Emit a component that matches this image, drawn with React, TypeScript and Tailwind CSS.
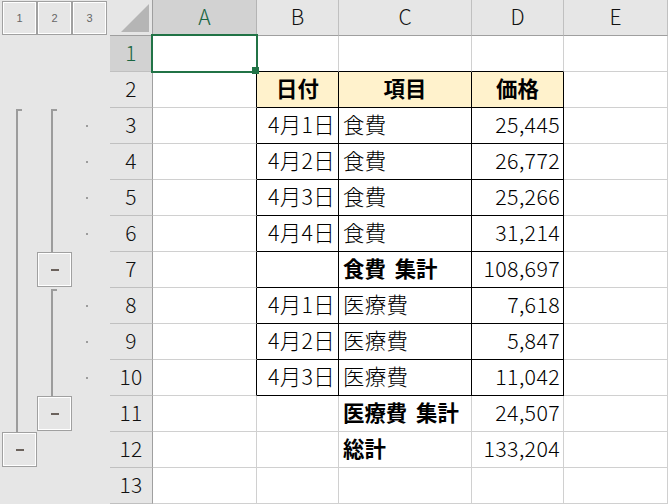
const FONT = "font-['Noto_Sans_CJK_JP','Liberation_Sans',sans-serif]";

type CellData = { t?: string; bold?: boolean; align?: 'l' | 'c' | 'r' };
type RowData = { n: number; outline: [string, string, string]; b?: CellData; c?: CellData; d?: CellData; boxed?: boolean; fill?: boolean };

const R = (t: string): CellData => ({ t, align: 'r' });
const L = (t: string): CellData => ({ t, align: 'l' });
const BL = (t: string): CellData => ({ t, align: 'l', bold: true });
const C = (t: string): CellData => ({ t, align: 'c', bold: true });

const rows: RowData[] = [
  { n: 1, outline: ['', '', ''] },
  { n: 2, outline: ['', '', ''], b: C('日付'), c: C('項目'), d: C('価格'), boxed: true, fill: true },
  { n: 3, outline: ['bartop', 'bartop', 'dot'], b: R('4月1日'), c: L('食費'), d: R('25,445'), boxed: true },
  { n: 4, outline: ['bar', 'bar', 'dot'], b: R('4月2日'), c: L('食費'), d: R('26,772'), boxed: true },
  { n: 5, outline: ['bar', 'bar', 'dot'], b: R('4月3日'), c: L('食費'), d: R('25,266'), boxed: true },
  { n: 6, outline: ['bar', 'bar', 'dot'], b: R('4月4日'), c: L('食費'), d: R('31,214'), boxed: true },
  { n: 7, outline: ['bar', 'minus', ''], c: BL('食費 集計'), d: R('108,697'), boxed: true },
  { n: 8, outline: ['bar', 'bartop', 'dot'], b: R('4月1日'), c: L('医療費'), d: R('7,618'), boxed: true },
  { n: 9, outline: ['bar', 'bar', 'dot'], b: R('4月2日'), c: L('医療費'), d: R('5,847'), boxed: true },
  { n: 10, outline: ['bar', 'bar', 'dot'], b: R('4月3日'), c: L('医療費'), d: R('11,042'), boxed: true },
  { n: 11, outline: ['bar', 'minus', ''], c: BL('医療費 集計'), d: R('24,507') },
  { n: 12, outline: ['minus', '', ''], c: BL('総計'), d: R('133,204') },
  { n: 13, outline: ['', '', ''] },
];

function OutlineButton({ children }: { children: React.ReactNode }) {
  return (
    <div className="w-[35px] h-[35px] border border-[#a0a0a0] bg-[#e6e6e6] shadow-[inset_0_0_0_1px_#ffffff] flex items-center justify-center">
      {children}
    </div>
  );
}

function OutlineCell({ kind }: { kind: string }) {
  return (
    <div className="w-[35px] h-[36px] shrink-0 relative">
      {kind === 'minus' && (
        <OutlineButton>
          <div className="w-[8px] h-[2px] bg-[#6b625c]" />
        </OutlineButton>
      )}
      {kind === 'bar' && <div className="ml-[14px] w-[2px] h-[36px] bg-[#9c9c9c]" />}
      {kind === 'bartop' && (
        <div className="ml-[14px] mt-px w-[6px] h-[35px] border-l-2 border-t-2 border-[#9c9c9c]" />
      )}
      {kind === 'dot' && (
        <div className="h-[36px] flex items-center">
          <div className="ml-[14px] w-[2px] h-[2px] bg-[#9c9c9c]" />
        </div>
      )}
    </div>
  );
}

function DataCell({ w, cell, boxed, fill, bottomBlack }: { w: string; cell?: CellData; boxed?: boolean; fill?: boolean; bottomBlack?: boolean }) {
  const align = cell?.align === 'r' ? 'justify-end pr-[3px]' : cell?.align === 'c' ? 'justify-center' : 'justify-start pl-[4px]';
  return (
    <div
      className={`${w} h-[36px] shrink-0 border-r border-b flex items-center pb-[3px] text-[21.4px] leading-none whitespace-nowrap text-black ${align} ${
        boxed ? 'border-r-black' : 'border-r-[#d0d0d0]'
      } ${boxed || bottomBlack ? 'border-b-black' : 'border-b-[#d0d0d0]'} ${fill ? 'bg-[#fff2cc]' : 'bg-white'} ${
        cell?.bold ? 'font-bold [word-spacing:4px]' : 'font-light tracking-[0.35px]'
      }`}
    >
      {cell?.t}
    </div>
  );
}

export default function App() {
  return (
    <div className={`w-[668px] h-[504px] overflow-hidden bg-white flex flex-col ${FONT}`}>
      <div className="flex h-[36px] shrink-0">
        <div className="w-[110px] h-[36px] shrink-0 bg-[#e6e6e6] pl-[2px] pt-px flex">
          {[1, 2, 3].map((l) => (
            <div
              key={l}
              className="w-[35px] h-[34px] border border-[#a0a0a0] bg-[#e6e6e6] shadow-[inset_0_0_0_1px_#ffffff] flex items-center justify-center text-[11px] text-[#666666] font-['Liberation_Sans',sans-serif]"
            >
              {l}
            </div>
          ))}
        </div>
        <div className="w-[43px] h-[36px] shrink-0 bg-[#e6e6e6] border-r border-b border-[#9f9f9f] flex items-center justify-center">
          <svg width="42" height="35" viewBox="0 0 42 35" className="block">
            <polygon points="11,32 39,4 39,32" fill="#b5b5b5" />
          </svg>
        </div>
        {[
          ['A', 'w-[104px]', true],
          ['B', 'w-[82px]', false],
          ['C', 'w-[133px]', false],
          ['D', 'w-[92px]', false],
          ['E', 'w-[104px]', false],
        ].map(([label, w, active]) => (
          <div
            key={label as string}
            className={`${w as string} h-[36px] shrink-0 border-r border-b flex items-center justify-center pb-[3px] text-[21px] leading-none font-light ${
              active
                ? 'bg-[#d2d2d2] text-[#1a6642] border-r-[#b4b4b4] border-b-[#9f9f9f]'
                : 'bg-[#e6e6e6] text-[#111111] border-r-[#c0c0c0] border-b-[#9f9f9f]'
            }`}
          >
            {label as string}
          </div>
        ))}
      </div>
      {rows.map((r) => (
        <div key={r.n} className="flex h-[36px] shrink-0">
          <div className="w-[110px] shrink-0 bg-[#e6e6e6] pl-[2px] flex">
            {r.outline.map((k, i) => (
              <OutlineCell key={i} kind={k} />
            ))}
          </div>
          <div
            className={`w-[43px] h-[36px] shrink-0 border-r border-r-[#9f9f9f] border-b border-b-[#c0c0c0] flex items-center justify-center pb-[3px] text-[21px] leading-none font-light tracking-[0.3px] ${
              r.n === 1 ? 'bg-[#d2d2d2] text-[#1a6642]' : 'bg-[#e6e6e6] text-[#111111]'
            }`}
          >
            {r.n}
          </div>
          <div
            className={`w-[104px] h-[36px] shrink-0 relative bg-white border-b border-b-[#d0d0d0] border-r ${
              r.boxed || r.fill ? 'border-r-black' : 'border-r-[#d0d0d0]'
            }`}
          >
            {r.n === 1 && (
              <div className="absolute left-[-2px] top-[-2px] w-[107px] h-[39px] border-2 border-[#217346] z-10">
                <div className="absolute right-[-3px] bottom-[-3px] w-[7px] h-[7px] bg-[#217346]" />
              </div>
            )}
          </div>
          <DataCell w="w-[82px]" cell={r.b} boxed={r.boxed} fill={r.fill} bottomBlack={r.n === 1} />
          <DataCell w="w-[133px]" cell={r.c} boxed={r.boxed} fill={r.fill} bottomBlack={r.n === 1} />
          <DataCell w="w-[92px]" cell={r.d} boxed={r.boxed} fill={r.fill} bottomBlack={r.n === 1} />
          <DataCell w="w-[104px]" />
        </div>
      ))}
    </div>
  );
}
